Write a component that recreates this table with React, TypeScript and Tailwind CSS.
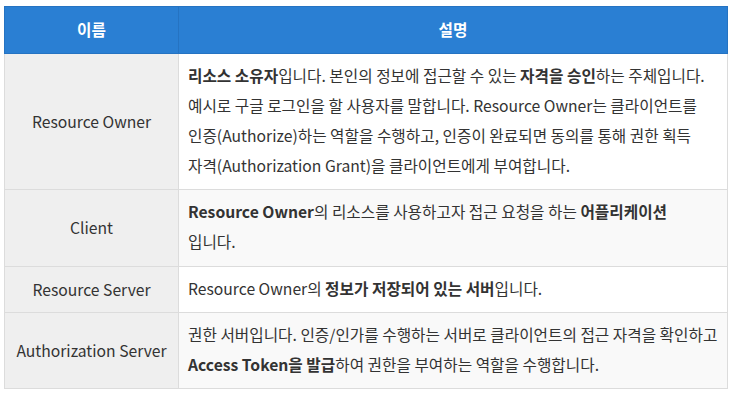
import React from 'react';

const rows = [
  {
    name: 'Resource Owner',
    bg: 'bg-white',
    h: 'h-[136px]',
    lines: [
      <><b>리소스 소유자</b>입니다. 본인의 정보에 접근할 수 있는 <b>자격을 승인</b>하는 주체입니다.</>,
      <>예시로 구글 로그인을 할 사용자를 말합니다. Resource Owner는 클라이언트를</>,
      <>인증(Authorize)하는 역할을 수행하고, 인증이 완료되면 동의를 통해 권한 획득</>,
      <>자격(Authorization Grant)을 클라이언트에게 부여합니다.</>,
    ],
  },
  {
    name: 'Client',
    bg: 'bg-[#f9f9f9]',
    h: 'h-[77px]',
    lines: [
      <><b>Resource Owner</b>의 리소스를 사용하고자 접근 요청을 하는 <b>어플리케이션</b></>,
      <>입니다.</>,
    ],
  },
  {
    name: 'Resource Server',
    bg: 'bg-white',
    h: 'h-[46px]',
    lines: [<>Resource Owner의 <b>정보가 저장되어 있는 서버</b>입니다.</>],
  },
  {
    name: 'Authorization Server',
    bg: 'bg-[#f9f9f9]',
    h: 'h-[76px]',
    lines: [
      <>권한 서버입니다. 인증/인가를 수행하는 서버로 클라이언트의 접근 자격을 확인하고</>,
      <><b>Access Token을 발급</b>하여 권한을 부여하는 역할을 수행합니다.</>,
    ],
  },
];

export default function App() {
  return (
    <div className="w-[733px] h-[397px] bg-white pt-[6px] pl-[4px] font-['Noto_Sans_CJK_KR','Noto_Sans',sans-serif] text-[15.7px] text-[#333]">
      <table className="w-[724px] border-collapse table-fixed">
        <thead>
          <tr className="bg-[#2a7fd3] text-white font-bold">
            <th className="w-[174px] h-[47px] border border-[#2573c2] text-center">이름</th>
            <th className="h-[47px] border border-[#2573c2] text-center">설명</th>
          </tr>
        </thead>
        <tbody>
          {rows.map((r) => (
            <tr key={r.name} className={r.h}>
              <td className="bg-[#efefef] border border-[#dcdcdc] text-center align-middle px-2">{r.name}</td>
              <td className={`${r.bg} border border-[#dcdcdc] px-[9px] pt-0 pb-[2px] align-middle leading-[30px] whitespace-nowrap`}>
                {r.lines.map((l, i) => (
                  <div key={i} className="[&_b]:font-bold">{l}</div>
                ))}
              </td>
            </tr>
          ))}
        </tbody>
      </table>
    </div>
  );
}
